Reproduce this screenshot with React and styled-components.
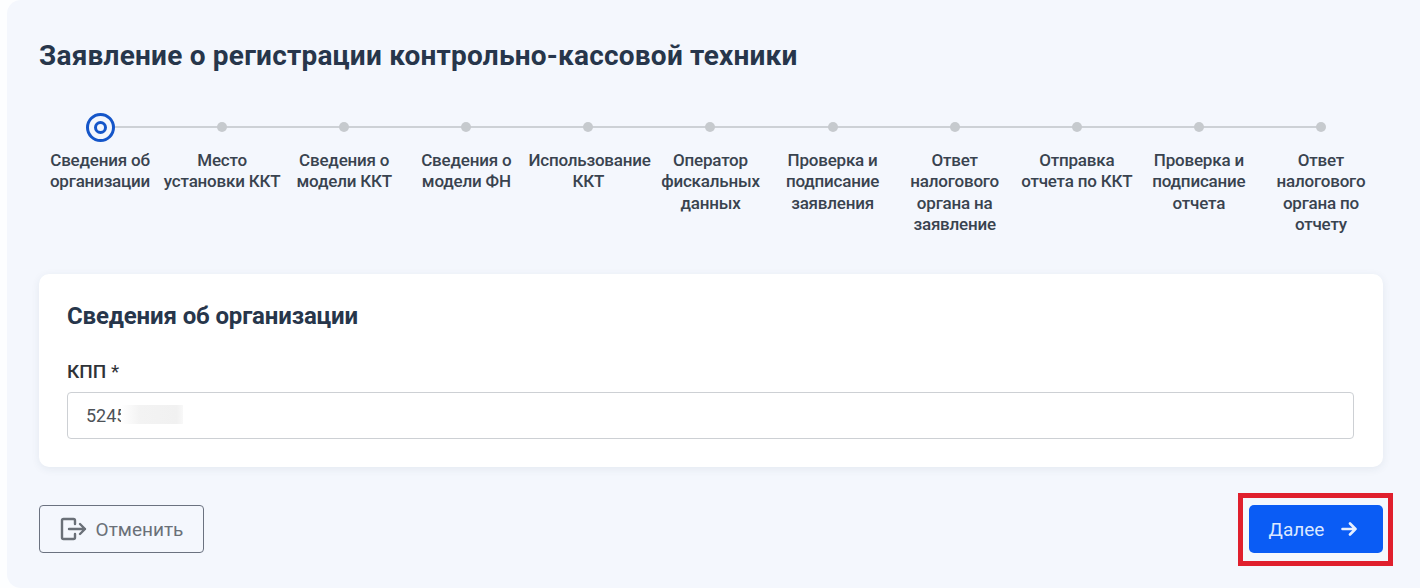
import React from 'react';
import styled, { createGlobalStyle } from 'styled-components';

const Global = createGlobalStyle`
  html, body { margin: 0; padding: 0; background: #fdfeff; }
  body { font-family: Roboto, "Liberation Sans", sans-serif; }
`;
const Page = styled.div`
  width: 1420px; height: 588px; box-sizing: border-box; overflow: hidden;
  padding-left: 7px;
`;
const Panel = styled.main`
  width: 1413px; height: 588px; box-sizing: border-box;
  background: #f4f7fd; border-radius: 14px 0 0 14px;
  padding: 40px 37px 0 32px;
`;
const Title = styled.h1`
  margin: 0; font-size: 28px; line-height: 32px; font-weight: 700; color: #27364b; letter-spacing: 0.21px;
`;
const Steps = styled.ol`
  list-style: none; margin: 41px 1px 0 0; padding: 0;
  display: grid; grid-template-columns: repeat(11, 1fr);
  height: 141px;
`;
const Step = styled.li`
  position: relative; display: flex; flex-direction: column; align-items: center;
  &::after {
    content: ''; display: ${p => (p.$last ? 'none' : 'block')};
    position: absolute; top: 13px; left: 50%; width: 100%; height: 2px; background: #cdd1d6;
  }
`;
const Marker = styled.div`
  height: 28px; display: flex; align-items: center; justify-content: center;
  position: relative; z-index: 1;
`;
const Dot = styled.span`
  width: 10px; height: 10px; border-radius: 50%; background: #c6cace;
`;
const Active = styled.span`
  width: 29px; height: 29px; box-sizing: border-box; border-radius: 50%;
  border: 3px solid #1556c9; background: #f4f7fd;
  display: flex; align-items: center; justify-content: center;
  &::before {
    content: ''; width: 13px; height: 13px; box-sizing: border-box;
    border-radius: 50%; border: 3.5px solid #1556c9;
  }
`;
const StepLabel = styled.span`
  margin-top: 9px; width: 120px; text-align: center;
  font-size: 17px; line-height: 21.4px; font-weight: 500; color: #39434f; letter-spacing: -0.2px;
`;
const Card = styled.section`
  margin-top: 20px; height: 193px; box-sizing: border-box;
  background: #fff; border-radius: 10px; padding: 26px 29px 0 28px;
  box-shadow: 0 2px 8px rgba(40, 60, 90, 0.08);
`;
const CardTitle = styled.h2`
  margin: 0; font-size: 24px; line-height: 32px; font-weight: 700; color: #27364b; letter-spacing: -0.14px;
`;
const Label = styled.label`
  display: block; margin-top: 28px; font-size: 19px; line-height: 24px; font-weight: 500; color: #2f3338;
`;
const Star = styled.span`font-weight: 400;`;
const Field = styled.div`
  position: relative; margin-top: 8px; height: 47px; box-sizing: border-box;
  border: 1px solid #cdd0d4; border-radius: 4px;
  padding: 0 18px; display: flex; align-items: center;
  font-size: 18px; color: #4d5257;
`;
const Blur = styled.span`
  position: absolute; left: 53px; top: 12px; width: 62px; height: 19px;
  background: linear-gradient(90deg, #fff 0%, #f3f3f3 30%, #f1f1f1 90%, #f8f8f8 100%);
`;
const Footer = styled.div`
  margin-top: 38px; display: flex; justify-content: space-between; align-items: center;
`;
const Cancel = styled.button`
  width: 165px; height: 48px; box-sizing: border-box; background: transparent;
  border: 1px solid #6b7280; border-radius: 4px; padding: 0;
  display: flex; align-items: center; justify-content: center; gap: 9px;
  font-family: inherit; font-size: 19px; color: #6a7078;
`;
const NextWrap = styled.div`position: relative;`;
const Next = styled.button`
  width: 134px; height: 48px; box-sizing: border-box; background: #0a5cf5;
  border: none; border-radius: 5px; padding: 0 6px 0 0;
  display: flex; align-items: center; justify-content: center; gap: 17px;
  font-family: inherit; font-size: 19px; font-weight: 400; color: #dbe8ff;
`;
const Highlight = styled.span`
  position: absolute; left: -11px; right: -10px; top: -12px; bottom: -13px;
  border: 5px solid #e01f2d; pointer-events: none;
`;

const steps = [
  'Сведения об организации', 'Место установки ККТ', 'Сведения о модели ККТ', 'Сведения о модели ФН',
  'Использование ККТ', 'Оператор фискальных данных', 'Проверка и подписание заявления',
  'Ответ налогового органа на заявление', 'Отправка отчета по ККТ', 'Проверка и подписание отчета',
  'Ответ налогового органа по отчету',
];

const ExitIcon = () => (
  <svg width="27" height="24" viewBox="0 0 27 24" fill="none" stroke="#6a7078" strokeWidth="2.4" strokeLinecap="round" strokeLinejoin="round">
    <path d="M15 7V3.5A1.5 1.5 0 0 0 13.5 2H3.5A1.5 1.5 0 0 0 2 3.5v17A1.5 1.5 0 0 0 3.5 22h10a1.5 1.5 0 0 0 1.5-1.5V17" />
    <path d="M9 12h16M20 7l5 5-5 5" />
  </svg>
);
const ArrowIcon = () => (
  <svg width="16" height="14" viewBox="0 0 16 14" fill="none" stroke="#e6efff" strokeWidth="2.6" strokeLinecap="round" strokeLinejoin="round">
    <path d="M1.5 7h13M9 1.5 14.5 7 9 12.5" />
  </svg>
);

export default function App() {
  return (
    <Page>
      <Global />
      <Panel>
        <Title>Заявление о регистрации контрольно-кассовой техники</Title>
        <Steps>
          {steps.map((s, i) => (
            <Step key={s} $last={i === steps.length - 1}>
              <Marker>{i === 0 ? <Active /> : <Dot />}</Marker>
              <StepLabel>{s}</StepLabel>
            </Step>
          ))}
        </Steps>
        <Card>
          <CardTitle>Сведения об организации</CardTitle>
          <Label>КПП <Star>*</Star></Label>
          <Field>5245<Blur /></Field>
        </Card>
        <Footer>
          <Cancel><ExitIcon />Отменить</Cancel>
          <NextWrap>
            <Next>Далее<ArrowIcon /></Next>
            <Highlight />
          </NextWrap>
        </Footer>
      </Panel>
    </Page>
  );
}
